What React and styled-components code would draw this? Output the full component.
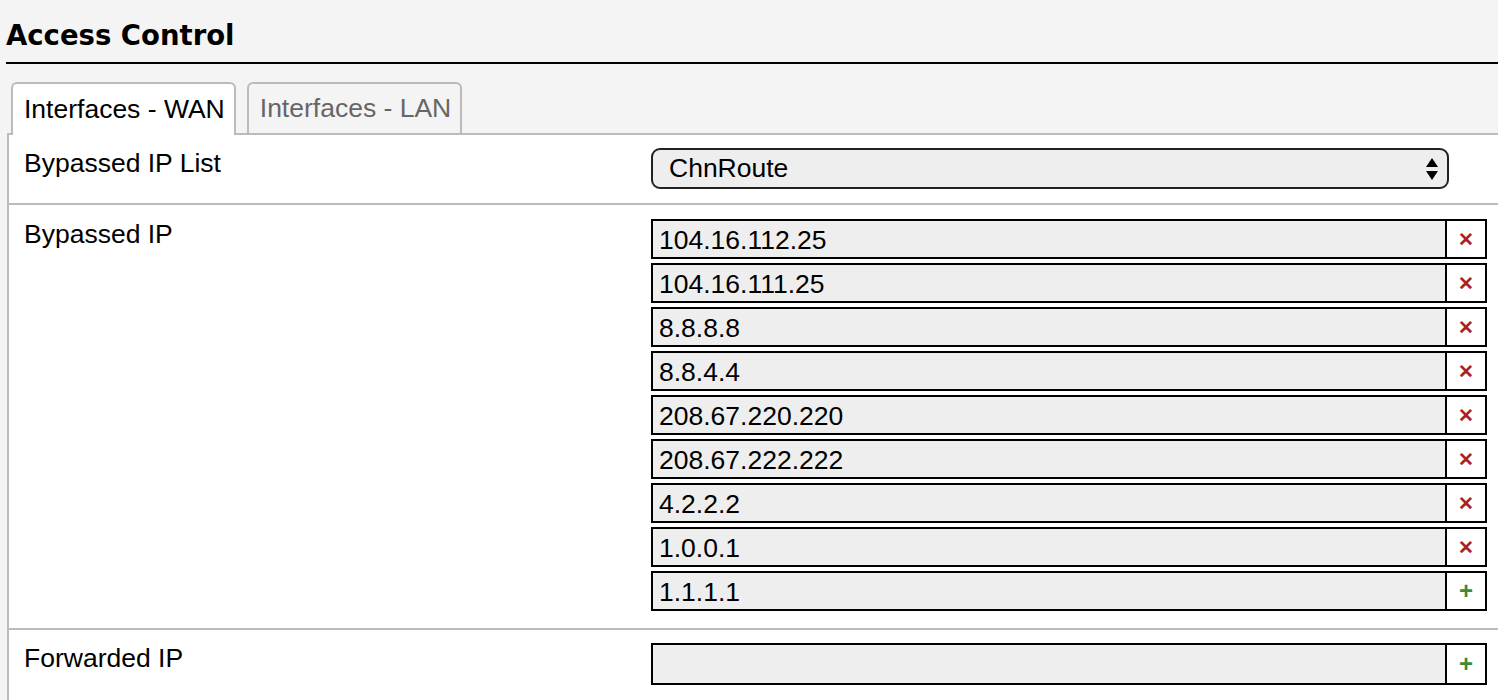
import React from 'react'
import styled, {createGlobalStyle} from 'styled-components'

const GlobalStyle = createGlobalStyle`
  html, body {
    margin: 0;
    padding: 0;
    background: #f4f4f4;
    font-family: "Liberation Sans", Arial, sans-serif;
    color: #000;
  }
`

const Page = styled.div`
  width: 1498px;
  height: 700px;
  overflow: hidden;
`

const Header = styled.div`
  padding: 17px 0 0 6px;
`

const Title = styled.h2`
  margin: 0;
  padding-bottom: 9px;
  font-family: "DejaVu Sans", Verdana, sans-serif;
  font-weight: bold;
  font-size: 27.5px;
  line-height: 36px;
  border-bottom: 2px solid #000;
`

const TabBar = styled.div`
  display: flex;
  gap: 11px;
  margin: 18px 0 0 11px;
`

const Tab = styled.div`
  padding: 0 9px 0 11px;
  display: flex;
  align-items: center;
  font-size: 26.5px;
  border: 2px solid #bbb;
  border-bottom: none;
  border-radius: 6px 6px 0 0;
  background: ${p => (p.active ? '#fff' : '#f4f4f4')};
  color: ${p => (p.active ? '#000' : '#666')};
  position: relative;
  margin-bottom: ${p => (p.active ? '-2px' : '0')};
  height: ${p => (p.active ? '51px' : '49px')};
  z-index: 1;
`

const Panel = styled.div`
  margin-left: 7px;
  background: #fff;
  border-left: 2px solid #bbb;
  border-top: 2px solid #bbb;
`

const Row = styled.div`
  display: grid;
  grid-template-columns: 627px 1fr;
  padding: ${p => p.pad || '13px 11px 14px 15px'};
  border-bottom: ${p => (p.last ? 'none' : '2px solid #bbb')};
`

const Label = styled.div`
  font-size: 26.5px;
  line-height: 30px;
`

const SelectBox = styled.div`
  width: 798px;
  height: 41px;
  box-sizing: border-box;
  border: 2px solid #222;
  border-radius: 9px;
  background: #eee;
  display: flex;
  align-items: center;
  justify-content: space-between;
  padding: 0 8px 0 16px;
  font-size: 26.5px;
`

const List = styled.div`
  display: flex;
  flex-direction: column;
  gap: 4px;
`

const InputRow = styled.div`
  display: flex;
  height: ${p => p.h || 40}px;
  box-sizing: border-box;
  border: 2px solid #000;
`

const Field = styled.div`
  flex: 1;
  background: #eee;
  font-size: 26.5px;
  line-height: 38px;
  padding-left: 6px;
`

const Btn = styled.div`
  width: 38px;
  border-left: 2px solid #000;
  background: #fff;
  display: flex;
  align-items: center;
  justify-content: center;
  color: ${p => (p.add ? '#3c8a3c' : '#a82222')};
  font-weight: bold;
  font-size: ${p => (p.add ? '24px' : '19px')};
  line-height: 1;
`

const Arrows = () => (
  <svg width="14" height="26" viewBox="0 0 14 26">
    <path d="M7 2 L13 11 L1 11 Z" fill="#000" />
    <path d="M1 15 L13 15 L7 24 Z" fill="#000" />
  </svg>
)

const ips = [
  '104.16.112.25',
  '104.16.111.25',
  '8.8.8.8',
  '8.8.4.4',
  '208.67.220.220',
  '208.67.222.222',
  '4.2.2.2',
  '1.0.0.1',
]

export default function App() {
  return (
    <Page>
      <GlobalStyle />
      <Header>
        <Title>Access Control</Title>
      </Header>
      <TabBar>
        <Tab active>Interfaces - WAN</Tab>
        <Tab>Interfaces - LAN</Tab>
      </TabBar>
      <Panel>
        <Row>
          <Label>Bypassed IP List</Label>
          <SelectBox>
            <span>ChnRoute</span>
            <Arrows />
          </SelectBox>
        </Row>
        <Row pad="14px 11px 17px 15px">
          <Label>Bypassed IP</Label>
          <List>
            {ips.map(ip => (
              <InputRow key={ip}>
                <Field>{ip}</Field>
                <Btn>✕</Btn>
              </InputRow>
            ))}
            <InputRow>
              <Field>1.1.1.1</Field>
              <Btn add>+</Btn>
            </InputRow>
          </List>
        </Row>
        <Row last pad="13px 11px 16px 15px">
          <Label>Forwarded IP</Label>
          <List>
            <InputRow h={42}>
              <Field />
              <Btn add>+</Btn>
            </InputRow>
          </List>
        </Row>
      </Panel>
    </Page>
  )
}
